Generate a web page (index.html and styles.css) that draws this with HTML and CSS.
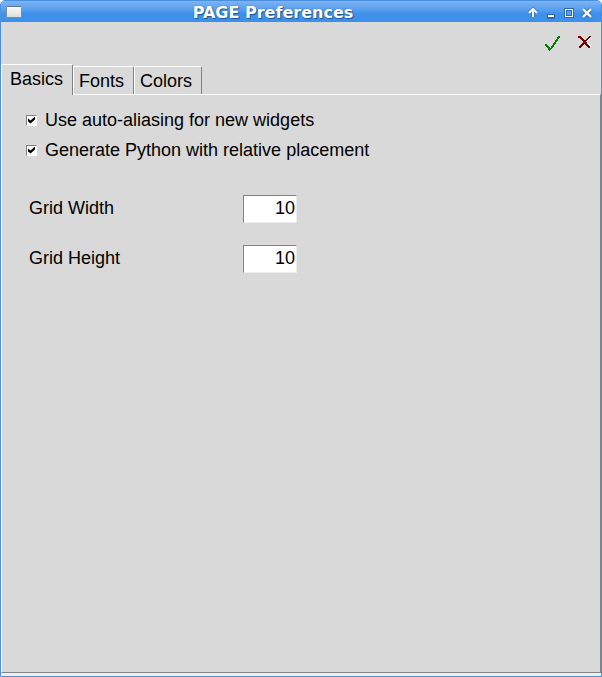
FILE: index.html
```html
<!DOCTYPE html>
<html lang="en">
<head>
<meta charset="utf-8">
<title>PAGE Preferences</title>
<link rel="stylesheet" href="styles.css">
</head>
<body>
<div class="window">
  <header class="titlebar">
    <svg class="app-icon" viewBox="0 0 16 14" aria-hidden="true">
      <defs><linearGradient id="sheet" x1="0" y1="0" x2="0" y2="1"><stop offset="0" stop-color="#fdfdfc"/><stop offset="1" stop-color="#dcdcd6"/></linearGradient></defs>
      <rect x="0.5" y="1.5" width="15" height="11" rx="1" fill="url(#sheet)" stroke="#7f8c96"/>
      <path d="M1 2.5h14" stroke="#fff"/>
      <path d="M1 1.5h14" stroke="#55789f"/>
    </svg>
    <h1 class="title">PAGE Preferences</h1>
    <div class="window-controls">
      <button class="control" aria-label="Shade"><svg viewBox="0 0 18 18"><g fill="none" stroke="#2a67ad" stroke-width="3.6" opacity=".7"><path d="M9 6v8M5 10l4-4 4 4"/></g><path d="M9 6v8M5 10l4-4 4 4" fill="none" stroke="#fff" stroke-width="2"/></svg></button>
      <button class="control" aria-label="Minimize"><svg viewBox="0 0 18 18"><path d="M5 11h8v5H5z" fill="#2c68ad"/><path d="M6 12h6v2H6z" fill="#fff"/></svg></button>
      <button class="control" aria-label="Maximize"><svg viewBox="0 0 18 18"><path d="M4 5h10v10H4z" fill="#2c68ad"/><path d="M5 6h8v8H5z" fill="#fff"/><path d="M6 7h6v6H6z" fill="#2c68ad"/><path d="M7 8h4v4H7z" fill="#5a9fec"/></svg></button>
      <button class="control" aria-label="Close"><svg viewBox="0 0 18 18"><path d="M5 6l8 8M13 6l-8 8" stroke="#2c68ad" stroke-width="4.2" opacity=".7"/><path d="M5 6l8 8M13 6l-8 8" stroke="#fff" stroke-width="2.4"/></svg></button>
    </div>
  </header>
  <main class="content">
    <div class="toolbar">
      <button class="action" aria-label="Apply"><svg viewBox="0 0 16 16" shape-rendering="crispEdges"><path fill="#008000" d="M13 1h2v1h-2zM12 2h3v1h-3zM12 3h2v1h-2zM11 4h2v1h-2zM10 5h3v1h-3zM10 6h2v1h-2zM9 7h2v1H9zM8 8h3v1H8zM8 9h2v1H8zM7 10h2v1H7zM6 11h3v1H6zM6 12h2v1H6zM0 9h2v1H0zM0 10h3v1H0zM1 11h3v1H1zM2 12h3v1H2zM3 13h4v1H3zM3 14h3v1H3zM4 15h1v1H4z"/></svg></button>
      <button class="action" aria-label="Cancel"><svg viewBox="0 0 16 16" shape-rendering="crispEdges"><path fill="#fff" d="M13 2h1v1h-1zM12 3h2v1h-2zM11 4h2v1h-2zM10 5h2v1h-2zM9 6h2v1H9zM10 8h2v1h-2zM11 9h2v1h-2zM12 10h2v1h-2zM13 11h1v1h-1zM4 11h1v1H4zM3 12h1v1H3z"/><path fill="#800000" d="M1 1h3v1H1zM1 2h4v1H1zM3 3h3v1H3zM4 4h3v1H4zM5 5h5v1H5zM6 6h3v1H6zM6 7h4v1H6zM5 8h5v1H5zM4 9h3v1H4zM8 9h3v1H8zM3 10h3v1H3zM9 10h3v1H9zM2 11h3v1H2zM10 11h3v1h-3zM2 12h2v1H2zM11 12h2v1h-2zM12 1h2v1h-2zM11 2h2v1h-2zM10 3h2v1h-2zM9 4h2v1H9z"/></svg></button>
    </div>
    <div class="tabs" role="tablist">
      <button class="tab active" role="tab" aria-selected="true">Basics</button>
      <button class="tab" role="tab" aria-selected="false">Fonts</button>
      <button class="tab" role="tab" aria-selected="false">Colors</button>
    </div>
    <form class="panel" role="tabpanel">
      <label class="check"><input type="checkbox" checked>Use auto-aliasing for new widgets</label>
      <label class="check"><input type="checkbox" checked>Generate Python with relative placement</label>
      <div class="fields">
        <label for="grid-width">Grid Width</label><input id="grid-width" type="text" value="10">
        <label for="grid-height">Grid Height</label><input id="grid-height" type="text" value="10">
      </div>
    </form>
  </main>
</div>
</body>
</html>
```
FILE: styles.css
```css
* {
  box-sizing: border-box;
}

body {
  margin: 0;
  background: #fff;
  color: #000;
  font: 18px/20px "Liberation Sans", Arial, sans-serif;
}

button,
input {
  margin: 0;
  padding: 0;
  border: 0;
  border-radius: 0;
  background: none;
  color: inherit;
  font: inherit;
}

svg {
  display: block;
}

.window {
  display: flex;
  flex-direction: column;
  min-height: 100vh;
  border: 1px solid #4a90e0;
  border-radius: 5px 5px 0 0;
  background: #eeeeec;
  overflow: hidden;
}

.titlebar {
  display: grid;
  grid-template-columns: auto 1fr auto;
  align-items: center;
  height: 21px;
  padding: 0 5px;
  background: linear-gradient(#7db3f3, #5a9fee 40%, #3e91ea 60%, #3e91ea);
}

.app-icon {
  width: 16px;
  height: 14px;
}

.title {
  margin: 0;
  padding-top: 2px;
  color: #fff;
  font: bold 16px/20px "DejaVu Sans", sans-serif;
  text-align: center;
  text-shadow: 1px 1px 1px #1f5797, 0 0 1px #1f5797;
}

.window-controls {
  display: flex;
  justify-content: flex-end;
}

.control,
.control svg {
  width: 18px;
  height: 18px;
}

.content {
  display: flex;
  flex: 1;
  flex-direction: column;
  margin-bottom: 3px;
  background: #d9d9d9;
}

.toolbar {
  display: flex;
  justify-content: flex-end;
  gap: 16px;
  height: 42px;
  padding: 13px 8px 0 0;
}

.action,
.action svg {
  width: 16px;
  height: 16px;
}

.tabs {
  display: flex;
  align-items: flex-end;
  height: 30px;
}

.tab {
  height: 28px;
  padding: 0 9px 0 5px;
  border: solid;
  border-width: 1px 1px 0 1px;
  border-color: #fff #828282 #fff #fff;
  border-radius: 2px 2px 0 0;
}

.tab.active {
  z-index: 1;
  height: 31px;
  margin-bottom: -1px;
  padding: 0 9px 2px 8px;
  background: #d9d9d9;
}

.panel {
  flex: 1;
  padding: 15px 24px;
  border: 1px solid;
  border-color: #fff #828282 #828282 #fff;
}

.check {
  display: flex;
  align-items: center;
  gap: 8px;
  height: 20px;
  margin-bottom: 10px;
}

.check input {
  display: grid;
  place-items: center;
  width: 11px;
  height: 11px;
  border: 1px solid;
  border-color: #828282 #fff #fff #828282;
  background: #fff;
  appearance: none;
}

.check input:checked::before {
  width: 7px;
  height: 7px;
  background: #000;
  clip-path: polygon(0 29%, 36% 57%, 100% 0, 100% 43%, 36% 100%, 0 71%);
  content: "";
}

.fields {
  display: grid;
  grid-template-columns: 214px 54px;
  row-gap: 22px;
  align-items: center;
  padding: 25px 0 0 3px;
}

.fields label {
  padding-bottom: 2px;
}

.fields input {
  width: 100%;
  height: 28px;
  padding: 0 1px 2px 0;
  border: 1px solid;
  border-color: #828282 #ececec #ececec #828282;
  background: #fff;
  text-align: right;
}
```
